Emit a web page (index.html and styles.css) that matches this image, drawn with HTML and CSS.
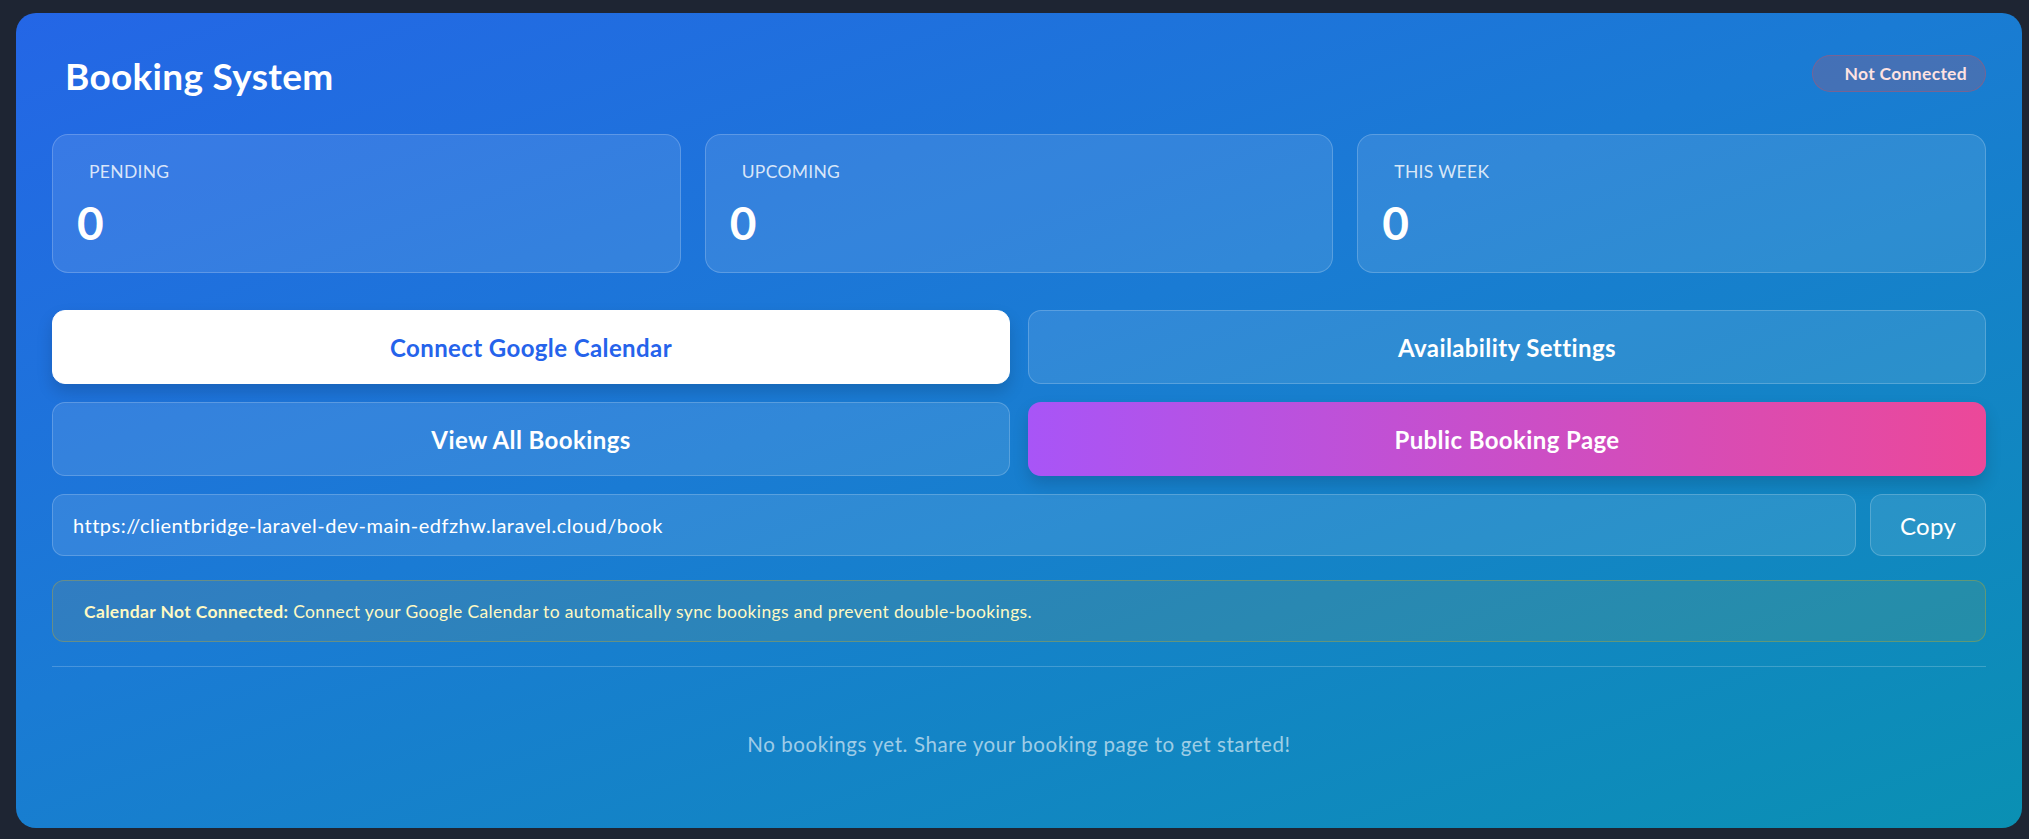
FILE: index.html
```html
<!DOCTYPE html>
<html lang="en">
<head>
<meta charset="UTF-8">
<meta name="viewport" content="width=device-width">
<title>Booking System</title>
<link rel="stylesheet" href="styles.css">
</head>
<body>
<div class="panel">
  <div class="panel-head">
    <h1 class="title">Booking System</h1>
    <span class="status">Not Connected</span>
  </div>

  <div class="stats">
    <div class="stat">
      <div class="stat-label">Pending</div>
      <div class="stat-value">0</div>
    </div>
    <div class="stat">
      <div class="stat-label">Upcoming</div>
      <div class="stat-value">0</div>
    </div>
    <div class="stat">
      <div class="stat-label">This Week</div>
      <div class="stat-value">0</div>
    </div>
  </div>

  <div class="actions">
    <button class="btn btn-white">Connect Google Calendar</button>
    <button class="btn btn-glass">Availability Settings</button>
    <button class="btn btn-glass">View All Bookings</button>
    <button class="btn btn-pink">Public Booking Page</button>
  </div>

  <div class="link-row">
    <input class="link-input" type="text" value="https://clientbridge-laravel-dev-main-edfzhw.laravel.cloud/book" readonly>
    <button class="copy-btn">Copy</button>
  </div>

  <div class="notice">
    <p><strong>Calendar Not Connected:</strong> Connect your Google Calendar to automatically sync bookings and prevent double-bookings.</p>
  </div>

  <hr class="divider">

  <p class="empty">No bookings yet. Share your booking page to get started!</p>
</div>
</body>
</html>
```

FILE: styles.css
```css
body {
  margin: 0;
  padding: 13px 7px 9px 16px;
  background: #1e2533;
  font-family: Lato, "Open Sans", sans-serif;
}
.panel {
  border-radius: 20px;
  padding: 36px;
  background: linear-gradient(160deg, #2466e6 0%, #1a7bd4 45%, #0a90b3 100%);
  color: #fff;
}
.panel-head {
  display: flex;
  justify-content: space-between;
  align-items: flex-start;
  height: 61px;
  margin-bottom: 24px;
}
.title {
  margin: 5px 0 0;
  padding-left: 13px;
  font-size: 37px;
  line-height: 44px;
  font-weight: 700;
  letter-spacing: 0.3px;
}
.status {
  margin-top: 6px;
  height: 37px;
  box-sizing: border-box;
  padding: 0 18px 0 32px;
  display: flex;
  align-items: center;
  border-radius: 999px;
  background: rgba(239, 68, 68, 0.2);
  border: 1px solid rgba(239, 68, 68, 0.3);
  color: #fee2e2;
  font-size: 17.5px;
  font-weight: 700;
  letter-spacing: 0.3px;
}

.stats {
  display: grid;
  grid-template-columns: repeat(3, 1fr);
  gap: 24px;
  margin-bottom: 37px;
}
.stat {
  height: 139px;
  box-sizing: border-box;
  padding: 24px;
  border-radius: 16px;
  background: rgba(255, 255, 255, 0.1);
  border: 1px solid rgba(255, 255, 255, 0.2);
}
.stat-label {
  padding-left: 12px;
  font-size: 17.5px;
  line-height: 25px;
  text-transform: uppercase;
  letter-spacing: 0.3px;
  color: rgba(255, 255, 255, 0.82);
}
.stat-value {
  margin-top: 12px;
  font-size: 46px;
  line-height: 54px;
  font-weight: 700;
}

.actions {
  display: grid;
  grid-template-columns: 1fr 1fr;
  gap: 18px;
}
.btn {
  height: 74px;
  border-radius: 13px;
  font-family: inherit;
  font-size: 24px;
  font-weight: 700;
  letter-spacing: 0.4px;
  cursor: pointer;
}
.btn-white {
  background: #fff;
  color: #2563eb;
  border: 1px solid #fff;
  box-shadow: 0 8px 16px rgba(0, 0, 0, 0.15);
}
.btn-glass {
  background: rgba(255, 255, 255, 0.1);
  border: 1px solid rgba(255, 255, 255, 0.2);
  color: #fff;
}
.btn-pink {
  background: linear-gradient(90deg, #a855f7, #ec4899);
  border: none;
  color: #fff;
  box-shadow: 0 8px 16px rgba(0, 0, 0, 0.15);
}

.link-row {
  display: flex;
  gap: 14px;
  margin-top: 18px;
}
.link-input {
  flex: 1;
  height: 62px;
  box-sizing: border-box;
  padding: 0 20px;
  border-radius: 12px;
  background: rgba(255, 255, 255, 0.1);
  border: 1px solid rgba(255, 255, 255, 0.2);
  color: #fff;
  font-family: inherit;
  font-size: 20px;
  letter-spacing: 0.5px;
  outline: none;
}
.copy-btn {
  width: 116px;
  height: 62px;
  border-radius: 12px;
  background: rgba(255, 255, 255, 0.1);
  border: 1px solid rgba(255, 255, 255, 0.2);
  color: #fff;
  font-family: inherit;
  font-size: 24px;
  letter-spacing: 0.3px;
}

.notice {
  margin-top: 24px;
  height: 62px;
  box-sizing: border-box;
  display: flex;
  align-items: center;
  padding: 0 31px;
  border-radius: 12px;
  background: rgba(234, 179, 8, 0.1);
  border: 1px solid rgba(234, 179, 8, 0.3);
  color: #fef9c3;
  font-size: 17.5px;
  letter-spacing: 0.35px;
}
.notice p {
  margin: 0;
}
.notice strong {
  font-weight: 700;
}

.divider {
  margin: 24px 0 0;
  border: none;
  border-top: 1px solid rgba(255, 255, 255, 0.2);
}
.empty {
  margin: 0;
  padding: 63px 0 34px;
  text-align: center;
  font-size: 20.5px;
  line-height: 28px;
  letter-spacing: 0.6px;
  color: rgba(255, 255, 255, 0.6);
}
```
